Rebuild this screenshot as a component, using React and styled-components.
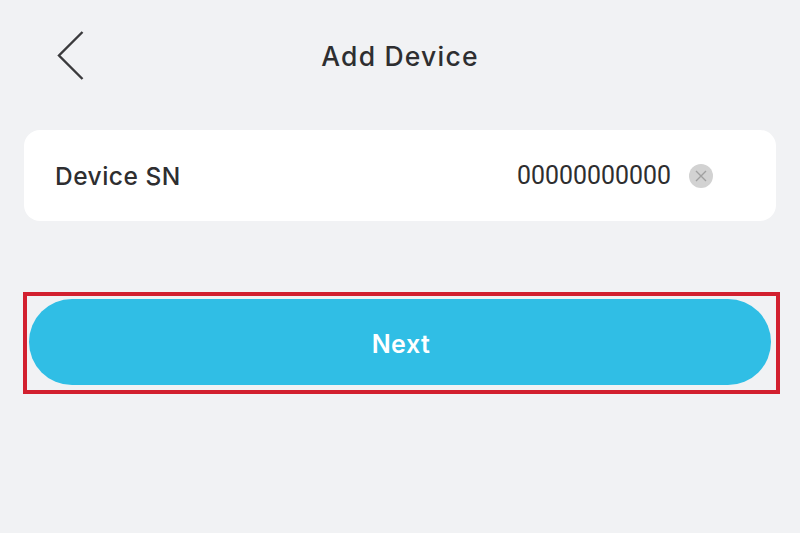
import styled, { createGlobalStyle } from 'styled-components'

const GlobalStyle = createGlobalStyle`
	html, body {
		margin: 0;
		padding: 0;
		background-color: #f1f2f4;
	}
`

const Page = styled.div`
	display: flex;
	flex-direction: column;
	width: 800px;
	height: 533px;
	overflow: hidden;
	background-color: #f1f2f4;
	font-family: Inter, "Liberation Sans", sans-serif;
	color: #2e2e30;
`

const Header = styled.header`
	display: flex;
	align-items: center;
	flex: 0 0 112px;
	padding-left: 56px;
`

const BackButton = styled.button`
	display: flex;
	width: 30px;
	height: 52px;
	padding: 0;
	border: 0;
	background: none;
	color: #3a3a3c;
`

const Title = styled.h1`
	flex: 1;
	margin: 0 0 0 -86px;
	text-align: center;
	font-size: 26.5px;
	font-weight: 450;
	letter-spacing: 1.2px;
`

const Card = styled.div`
	display: flex;
	align-items: center;
	justify-content: space-between;
	height: 91px;
	margin: 18px 24px 0;
	padding: 0 63px 0 31px;
	border-radius: 16px;
	background-color: #fff;
`

const Label = styled.span`
	font-size: 24.5px;
	font-weight: 450;
	letter-spacing: 0.5px;
`

const Value = styled.div`
	display: flex;
	align-items: center;
	gap: 18px;
`

const Serial = styled.span`
	font-family: Roboto, sans-serif;
	font-size: 24.9px;
`

const ClearButton = styled.button`
	display: flex;
	align-items: center;
	justify-content: center;
	width: 24px;
	height: 24px;
	padding: 0;
	border: 0;
	border-radius: 50%;
	background-color: #d2d2d2;
	color: #a0a0a0;
`

const Highlight = styled.div`
	display: flex;
	align-items: flex-start;
	justify-content: flex-start;
	width: 757px;
	height: 102px;
	margin: 71px 0 0 23px;
	padding: 3px 0 0 2px;
	box-sizing: border-box;
	border: 4px solid #d2202f;
`

const NextButton = styled.button`
	width: 742px;
	height: 86px;
	padding: 4px 0 0 2px;
	border: 0;
	border-radius: 43px;
	background-color: #30bee5;
	color: #fff;
	font-family: Inter, "Liberation Sans", sans-serif;
	font-size: 25px;
	font-weight: 600;
	letter-spacing: 0.5px;
`

const App = () => {
	return (
		<Page>
			<GlobalStyle />
			<Header>
				<BackButton aria-label="Back">
					<svg width="30" height="52" viewBox="0 0 30 52" fill="none">
						<path d="M26.5 2 L3 25.5 L26.5 49" stroke="currentColor" strokeWidth="2.4" />
					</svg>
				</BackButton>
				<Title>Add Device</Title>
			</Header>
			<Card>
				<Label>Device SN</Label>
				<Value>
					<Serial>00000000000</Serial>
					<ClearButton aria-label="Clear">
						<svg width="14" height="14" viewBox="0 0 14 14" fill="none">
							<path d="M2 2 L12 12 M12 2 L2 12" stroke="currentColor" strokeWidth="1.4" />
						</svg>
					</ClearButton>
				</Value>
			</Card>
			<Highlight>
				<NextButton>Next</NextButton>
			</Highlight>
		</Page>
	)
}

export default App
